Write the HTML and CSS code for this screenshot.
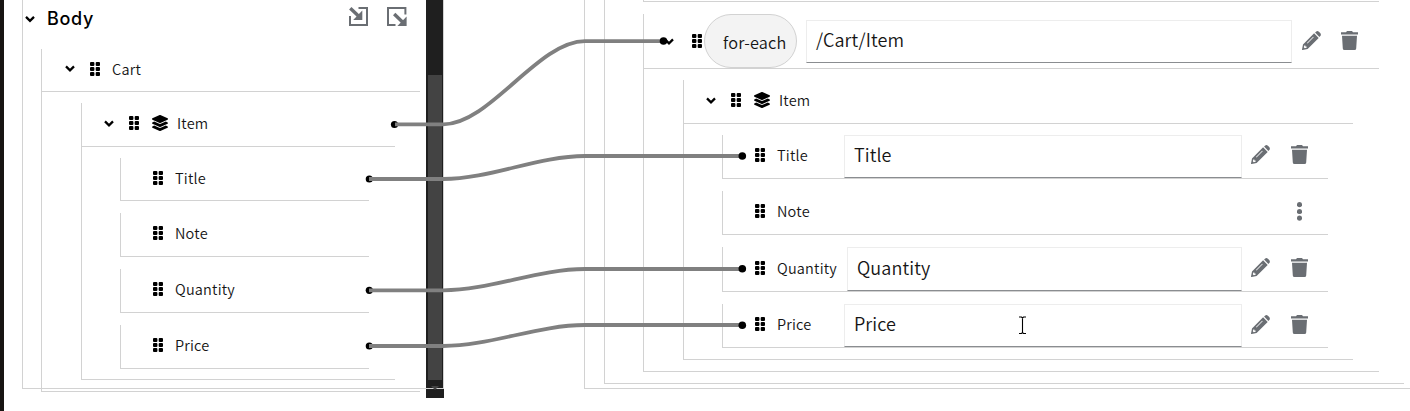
FILE: index.html
```html
<!DOCTYPE html>
<html lang="en">
<head>
<meta charset="utf-8">
<title>Data mapper</title>
<link rel="stylesheet" href="styles.css">
</head>
<body>
<svg class="sprite" aria-hidden="true">
  <symbol id="chevron" viewBox="0 0 10 7"><path d="M1 1.4 L5 5.3 L9 1.4" fill="none" stroke="#000" stroke-width="2.3"/></symbol>
  <symbol id="grip" viewBox="0 0 10 14"><g fill="#000"><rect width="4.4" height="4" rx="1"/><rect x="5.7" width="4.3" height="4" rx="1"/><rect y="5" width="4.4" height="4" rx="1"/><rect x="5.7" y="5" width="4.3" height="4" rx="1"/><rect y="10" width="4.4" height="4" rx="1"/><rect x="5.7" y="10" width="4.3" height="4" rx="1"/></g></symbol>
  <symbol id="layers" viewBox="0 0 512 512"><path d="M12.41 148.02l232.94 105.67c6.8 3.09 14.49 3.09 21.29 0l232.94-105.67c16.55-7.51 16.55-32.52 0-40.03L266.65 2.31a25.607 25.607 0 0 0-21.29 0L12.41 107.98c-16.55 7.51-16.55 32.53 0 40.04zm487.18 88.28l-58.09-26.33-161.64 73.27c-7.56 3.43-15.59 5.17-23.86 5.17s-16.29-1.74-23.86-5.17L70.51 209.97l-58.1 26.33c-16.55 7.5-16.55 32.5 0 40l232.94 105.59c6.8 3.08 14.49 3.08 21.29 0L499.59 276.3c16.55-7.5 16.55-32.5 0-40zm0 127.8l-57.87-26.23-161.86 73.37c-7.56 3.43-15.59 5.17-23.86 5.17s-16.29-1.74-23.86-5.17L70.29 337.87 12.41 364.1c-16.55 7.5-16.55 32.5 0 40l232.94 105.59c6.8 3.08 14.49 3.08 21.29 0L499.59 404.1c16.55-7.5 16.55-32.5 0-40z"/></symbol>
  <symbol id="pencil" viewBox="0 0 19 19"><g fill="#6a6e73"><path d="M13.1 1.5 L14 .7 Q15.4 -.5 16.9 .8 L18.2 2.1 Q19.5 3.6 18.3 5 L17.4 5.9 Z"/><path fill-rule="evenodd" d="M12.1 2.3 L16.7 6.9 L5.6 18 L.6 19 Q0 19 0 18.4 L1 13.4 Z M11.2 5.7 L5 11.9 L5.5 12.4 L11.7 6.2 Z M2.3 14.5 L1.8 16.3 L2.7 17.2 L4.6 16.7 L4.6 15.5 L3.4 15.5 L3.4 14.5 Z"/></g></symbol>
  <symbol id="trash" viewBox="0 0 17 19"><path fill="#6a6e73" d="M0 1.2 H5 L6 0 H11 L12 1.2 H17 V3.6 H0Z M1 4.7 H16 L15.2 17.4 Q15.1 19 13.5 19 H3.5 Q1.9 19 1.8 17.4Z"/></symbol>
  <symbol id="kebab" viewBox="0 0 5 19"><g fill="#6a6e73"><circle cx="2.5" cy="2.7" r="2.6"/><circle cx="2.5" cy="9.5" r="2.6"/><circle cx="2.5" cy="16.2" r="2.6"/></g></symbol>
  <symbol id="import" viewBox="0 0 20 19"><g fill="none" stroke="#6a6e73"><path d="M9.5 1 H18 V18 H1 V9" stroke-width="2"/><path d="M1.3 1.3 L10 9.6" stroke-width="3.4"/></g><path fill="#6a6e73" d="M13.3 3.6 V13 H4.2Z"/></symbol>
  <symbol id="export" viewBox="0 0 20 19"><g fill="none" stroke="#6a6e73"><path d="M18.4 7.5 V1 H1 V18 H8.5" stroke-width="2"/><path d="M7.2 7 L16 15.4" stroke-width="3.4"/></g><path fill="#6a6e73" d="M19.6 9.4 V19 H10.4Z"/></symbol>
</svg>
<main class="mapper">
  <section class="source">
    <div class="document">
      <header class="document-head">
        <svg class="chevron"><use href="#chevron"/></svg>
        <h2 class="document-title">Body</h2>
        <svg class="transfer"><use href="#import"/></svg>
        <svg class="transfer"><use href="#export"/></svg>
      </header>
      <div class="node root">
        <div class="row"><svg class="chevron"><use href="#chevron"/></svg><svg class="grip"><use href="#grip"/></svg><span class="label">Cart</span></div>
        <div class="node">
          <div class="row"><svg class="chevron"><use href="#chevron"/></svg><svg class="grip"><use href="#grip"/></svg><svg class="layers"><use href="#layers"/></svg><span class="label after-layers">Item</span></div>
          <div class="fields">
            <div class="field"><svg class="grip"><use href="#grip"/></svg><span class="label">Title</span></div>
            <div class="field"><svg class="grip"><use href="#grip"/></svg><span class="label">Note</span></div>
            <div class="field"><svg class="grip"><use href="#grip"/></svg><span class="label">Quantity</span></div>
            <div class="field"><svg class="grip"><use href="#grip"/></svg><span class="label">Price</span></div>
          </div>
        </div>
      </div>
    </div>
    <div class="scrollbar"><div class="thumb"></div><div class="arrow"></div></div>
  </section>
  <section class="target">
    <div class="target-body">
      <div class="sibling"></div>
      <div class="node loop">
        <div class="row loop-row"><svg class="chevron"><use href="#chevron"/></svg><svg class="grip"><use href="#grip"/></svg><span class="pill">for-each</span><div class="input">/Cart/Item</div><svg class="pencil"><use href="#pencil"/></svg><svg class="trash"><use href="#trash"/></svg></div>
        <div class="node target-item">
          <div class="row"><svg class="chevron"><use href="#chevron"/></svg><svg class="grip"><use href="#grip"/></svg><svg class="layers"><use href="#layers"/></svg><span class="label after-layers">Item</span></div>
          <div class="fields target-fields">
            <div class="field"><svg class="grip"><use href="#grip"/></svg><span class="label">Title</span><div class="input">Title</div><svg class="pencil"><use href="#pencil"/></svg><svg class="trash"><use href="#trash"/></svg></div>
            <div class="field"><svg class="grip"><use href="#grip"/></svg><span class="label">Note</span><svg class="kebab"><use href="#kebab"/></svg></div>
            <div class="field tall"><svg class="grip"><use href="#grip"/></svg><span class="label wide">Quantity</span><div class="input">Quantity</div><svg class="pencil"><use href="#pencil"/></svg><svg class="trash"><use href="#trash"/></svg></div>
            <div class="field"><svg class="grip"><use href="#grip"/></svg><span class="label">Price</span><div class="input">Price</div><svg class="pencil"><use href="#pencil"/></svg><svg class="trash"><use href="#trash"/></svg></div>
          </div>
        </div>
      </div>
    </div>
  </section>
  <svg class="links" width="1410" height="411" viewBox="0 0 1410 411">
    <g><circle cx="394.5" cy="124.5" r="3.6"/><circle cx="369.3" cy="179" r="3.6"/><circle cx="369.3" cy="290.3" r="3.6"/><circle cx="369.3" cy="346" r="3.6"/></g>
    <g fill="none" stroke="#808080" stroke-width="3.8">
      <path d="M395 124.4 H443 C490 124.4 538 41.2 585 41.2 H664"/>
      <path d="M369 179 H443 C490 179 538 156 585 156 H742"/>
      <path d="M369 290.3 H443 C490 290.3 538 269 585 269 H742"/>
      <path d="M369 346 H443 C490 346 538 325 585 325 H742"/>
    </g>
    <g><circle cx="663.5" cy="41" r="3.8"/><circle cx="742.3" cy="156" r="3.8"/><circle cx="742.3" cy="268.8" r="3.8"/><circle cx="742.3" cy="325.2" r="3.8"/></g>
    <path d="M1019 317 H1021.5 L1022.5 318 L1023.5 317 H1026 M1022.5 317.5 V333 M1019 333.5 H1021.5 L1022.5 332.5 L1023.5 333.5 H1026" fill="none" stroke="#000" stroke-width="1.1"/>
  </svg>
</main>
</body>
</html>
```
FILE: styles.css
```css
* { box-sizing: border-box; }
body { margin: 0; background: #fff; color: #151515; font-family: "Noto Sans CJK SC", "Noto Sans", sans-serif; font-weight: 350; overflow: hidden; }
svg { display: block; flex: none; }
.sprite { display: none; }
.mapper { position: relative; display: flex; width: 1410px; height: 411px; border-left: 4px solid #181512; overflow: hidden; }
.links { position: absolute; left: -4px; top: 0; }

.source { display: flex; width: 440px; height: 398px; padding-left: 18px; }
.document { width: 404px; height: 389px; border-left: 1px solid #d2d2d2; border-bottom: 1px solid #d2d2d2; }
.document-head { display: flex; align-items: center; height: 49px; padding: 0 19px 12px 2px; }
.document-title { flex: 1; margin: 0 0 0 12px; font: 500 18px/24px Inter, sans-serif; letter-spacing: .7px; color: #000; }
.transfer { width: 20px; height: 19px; margin: -4px 0 0 18px; }

.scrollbar { width: 18px; height: 398px; padding: 75px 2px 0; background: linear-gradient(#d2d2d2, #d2d2d2) 0 388px / 18px 1px no-repeat, linear-gradient(#d2d2d2, #d2d2d2) 17px 0 / 1px 389px no-repeat, #1f1f1f; }
.thumb { width: 14px; height: 305px; background: #434343; }
.arrow { margin: 6px auto 0; width: 8px; border: 4px solid transparent; border-top-color: #444; border-bottom: 0; }

.node { border-left: 1px solid #d2d2d2; border-bottom: 1px solid #d2d2d2; }
.node > .node { margin: 11px 25px 11px 39px; }
.node > .target-item { margin-right: 26px; }
.node.root { width: 379px; margin-left: 18px; }
.row { display: flex; align-items: center; height: 43px; padding: 0 0 3px 23px; border-bottom: 1px solid #d2d2d2; }
.node > .node .row { height: 44px; padding-left: 22px; }
.chevron { width: 10px; height: 7px; }
.document-head .chevron { height: 8px; }
.grip { width: 10px; height: 14px; margin-left: 15px; }
.layers { width: 16px; height: 16px; margin-left: 13px; }
.label { margin-left: 12px; font-size: 14.5px; line-height: 20px; letter-spacing: .2px; white-space: nowrap; }
.after-layers { margin-left: 9px; }

.fields { display: flex; flex-direction: column; gap: 12px; padding: 11px 26px 10px 38px; }
.field { display: flex; align-items: center; height: 44px; padding: 0 0 3px 32px; border-left: 1px solid #d2d2d2; border-bottom: 1px solid #d2d2d2; }
.field .grip { margin-left: 0; }
.field:first-child { height: 43px; }

.target { width: 826px; height: 389px; margin-left: 140px; border-left: 1px solid #d2d2d2; border-bottom: 1px solid #d2d2d2; }
.target-body { width: 800px; height: 384px; margin-left: 19px; padding: 0 25px 0 38px; border-left: 1px solid #d2d2d2; border-bottom: 1px solid #d2d2d2; }
.sibling { height: 2px; margin-bottom: 12px; border-left: 1px solid #d2d2d2; border-bottom: 1px solid #d2d2d2; }
.loop { height: 358px; }
.loop-row { height: 55px; padding: 0 21px 0 20px; }
.loop-row .grip { margin-left: 18px; }
.pill { width: 93px; height: 54px; margin-left: 2px; padding: 1px 0 0 18px; border: 1px solid #d2d2d2; border-radius: 27px; background: #f3f3f3; font-size: 16.3px; line-height: 52px; letter-spacing: .2px; white-space: nowrap; }
.input { flex: 1; height: 43px; margin-left: 9px; padding-left: 9px; border: 1px solid #ededed; border-bottom-color: #8a8d90; background: #fff; font-size: 18px; line-height: 37px; letter-spacing: .1px; }
.loop-row .input { margin-top: 1px; }
.pencil { width: 19px; height: 19px; margin: 0 0 0 9px; }
.trash { width: 17px; height: 19px; margin-left: 21px; }
.loop-row .pencil, .loop-row .trash { margin-top: -2px; }
.loop-row .pencil { margin-left: 10px; }
.loop-row .trash { margin-left: 20px; }
.target-fields { padding-right: 25px; padding-bottom: 11px; }
.target-fields .field { height: 44px; padding: 0 20px 3px 32px; }
.target-fields .field:first-child { padding-bottom: 4px; }
.target-fields .label { width: 58px; }
.target-fields .label.wide { width: 61px; }
.target-fields .input { align-self: flex-start; }
.target-fields .field.tall { height: 45px; }
.target-fields .tall .input { height: 44px; line-height: 39px; }
.kebab { width: 5px; height: 19px; margin: 0 6px 0 auto; }
```
